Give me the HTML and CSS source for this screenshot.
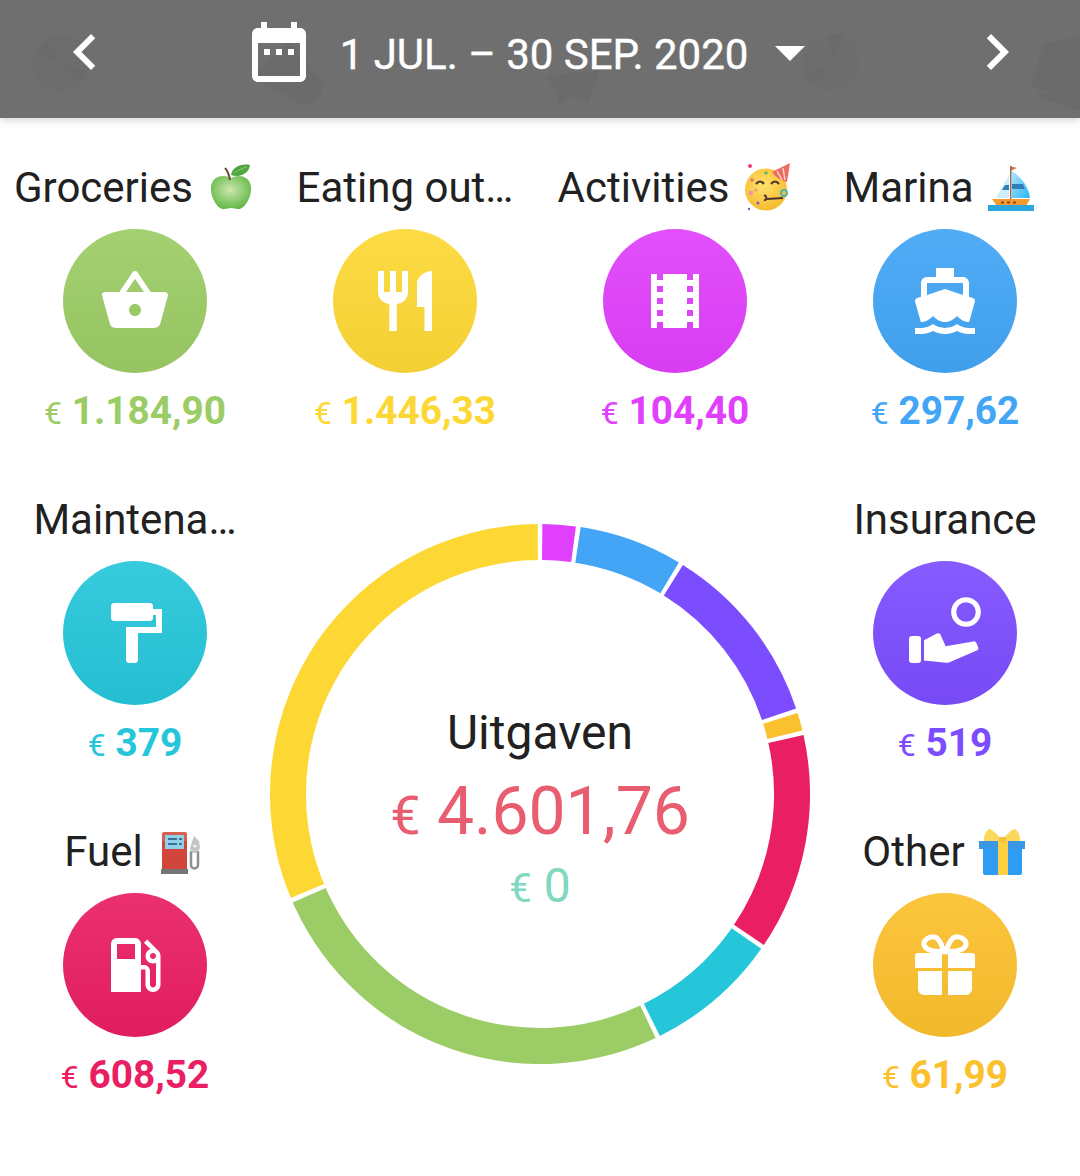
FILE: index.html
```html
<!DOCTYPE html>
<html>
<head>
    <title>Uitgaven</title>
    <link rel="stylesheet" href="styles.css">
</head>
<body>
    <header class="app-bar">
        <svg class="watermark" viewBox="0 0 1080 118">
            <circle cx="61" cy="63" r="28"/>
            <path d="M61 63L46 40l-8 12zM61 63l26 10-4 8z"/>
            <path d="M252 78l36-36 36 40-4 14-14 10zM262 78l40 26"/>
            <path d="M546 76l54-6-12 34-16-8-12 10-4-14z"/>
            <circle cx="831" cy="63" r="28"/>
            <path d="M831 63l-2-30 14 2zM831 63l-26 14 6 8z"/>
            <path d="M1030 86l14-42 36-8v69zM1040 92l40 14v5l-44-14z"/>
        </svg>
        <svg class="bar-icon" viewBox="0 0 24 24"><path d="M15.41 16.59L10.83 12l4.58-4.59L14 6l-6 6 6 6 1.41-1.41z"/></svg>
        <div class="range">
            <svg class="bar-icon" viewBox="0 0 24 24"><path d="M9 11H7v2h2v-2zm4 0h-2v2h2v-2zm4 0h-2v2h2v-2zm2-7h-1V2h-2v2H8V2H6v2H5c-1.11 0-1.99.9-1.99 2L3 20c0 1.1.89 2 2 2h14c1.1 0 2-.9 2-2V6c0-1.1-.9-2-2-2zm0 16H5V9h14v11z"/></svg>
            <span class="range-text">1 JUL. – 30 SEP. 2020</span>
            <svg class="bar-icon" viewBox="0 0 24 24"><path d="M7 10l5 5 5-5z"/></svg>
        </div>
        <svg class="bar-icon" viewBox="0 0 24 24"><path d="M8.59 16.59L13.17 12 8.59 7.41 10 6l6 6-6 6-1.41-1.41z"/></svg>
    </header>

    <main class="board">
        <div class="category green">
            <div class="label">Groceries
                <svg class="emoji" viewBox="0 0 48 48">
                    <defs><radialGradient id="apple" cx=".48" cy=".42" r=".6"><stop offset="0" stop-color="#cfe6b0"/><stop offset="1" stop-color="#5fb845"/></radialGradient></defs>
                    <g transform="translate(1 0)">
                        <path d="M22 15C28 11 41 12 42 24 43 34 35 47 29 46 26 46 25 45 22 45 19 45 18 46 15 46 9 47 1 34 2 24 3 12 16 11 22 15z" fill="url(#apple)"/>
                        <path d="M21 17C20 11 19 8 16 5" fill="none" stroke="#6d4c41" stroke-width="2"/>
                        <path d="M22 12C23 5 31 0 41 2 40 10 32 15 22 12z" fill="#4fa63f"/>
                        <path d="M25 10C30 7 34 5 38 4" fill="none" stroke="#8bc97a" stroke-width="1"/>
                    </g>
                </svg>
            </div>
            <div class="badge">
                <svg viewBox="0 0 24 24"><path d="M17.21 9l-4.38-6.56c-.19-.28-.51-.42-.83-.42-.32 0-.64.14-.83.43L6.79 9H2c-.55 0-1 .45-1 1 0 .09.01.18.04.27l2.54 9.27c.23.84 1 1.46 1.92 1.46h13c.92 0 1.69-.62 1.93-1.46l2.54-9.27L23 10c0-.55-.45-1-1-1h-4.79zM9 9l3-4.4L15 9H9zm3 8c-1.1 0-2-.9-2-2s.9-2 2-2 2 .9 2 2-.9 2-2 2z"/></svg>
            </div>
            <div class="amount"><span class="currency">€</span> 1.184,90</div>
        </div>

        <div class="category yellow">
            <div class="label">Eating out…</div>
            <div class="badge">
                <svg viewBox="0 0 24 24"><path d="M11 9H9V2H7v7H5V2H3v7c0 2.12 1.66 3.84 3.75 3.97V22h2.5v-9.03C11.34 12.84 13 11.12 13 9V2h-2v7zm5-3v8h2.5v8H21V2c-2.76 0-5 2.24-5 4z"/></svg>
            </div>
            <div class="amount"><span class="currency">€</span> 1.446,33</div>
        </div>

        <div class="category magenta">
            <div class="label">Activities
                <svg class="emoji" viewBox="0 0 48 48">
                    <defs><radialGradient id="face" cx=".45" cy=".4" r=".65"><stop offset="0" stop-color="#ffe36b"/><stop offset="1" stop-color="#f5b72b"/></radialGradient></defs>
                    <circle cx="22" cy="26.500" r="21" fill="url(#face)"/>
                    <path d="M46 0L28 9Q34 17 43 19z" fill="#ef6a62"/>
                    <path d="M33 8l5 9M39 5l2 12" stroke="#fbd5c8" stroke-width="1.500"/>
                    <path d="M12 21q4-5 8 0M27 21q4-5 8 0" fill="none" stroke="#4e342e" stroke-width="2.200"/>
                    <path d="M20 33c3-2 3 5 0 4" fill="none" stroke="#4e342e" stroke-width="2"/>
                    <path d="M23 36l16-1" stroke="#4e342e" stroke-width="2"/>
                    <circle cx="40" cy="30" r="3" fill="none" stroke="#4db6ac" stroke-width="2"/>
                    <circle cx="8" cy="17" r="1.800" fill="#e57373"/>
                    <circle cx="7" cy="30" r="2.200" fill="#f48fb1"/>
                    <circle cx="12" cy="27" r="1.500" fill="#ef9a9a"/>
                    <circle cx="14" cy="40" r="1.500" fill="#7e57c2"/>
                    <circle cx="22" cy="10" r="1.800" fill="#66bb6a"/>
                    <circle cx="6" cy="3" r="2" fill="#ec407a"/>
                    <circle cx="5" cy="46" r="1.200" fill="#5c6bc0"/>
                </svg>
            </div>
            <div class="badge">
                <svg viewBox="0 0 24 24"><path d="M18 3v2h-2V3H8v2H6V3H4v18h2v-2h2v2h8v-2h2v2h2V3h-2zM8 17H6v-2h2v2zm0-4H6v-2h2v2zm0-4H6V7h2v2zm10 8h-2v-2h2v2zm0-4h-2v-2h2v2zm0-4h-2V7h2v2z"/></svg>
            </div>
            <div class="amount"><span class="currency">€</span> 104,40</div>
        </div>

        <div class="category blue">
            <div class="label">Marina
                <svg class="emoji emoji-boat" viewBox="0 0 48 48">
                    <defs><linearGradient id="sail" x1="0" y1="0" x2="1" y2="1"><stop offset="0" stop-color="#b3e5fc"/><stop offset="1" stop-color="#29b6f6"/></linearGradient></defs>
                    <path d="M23 3l7 2-7 3z" fill="#e8683f"/>
                    <path d="M23 3h1.500v33H23z" fill="#8d6e63"/>
                    <path d="M25 8L25 35 43 35C42 24 34 14 25 8z" fill="url(#sail)"/>
                    <path d="M22 12L22 35 9 35z" fill="#cfeefb"/>
                    <path d="M22 22v5H15l3-5z" fill="#2f7fb8"/>
                    <path d="M25 21h11l2 5H25z" fill="#2f7fb8"/>
                    <path d="M5 36h38l-4 7H10z" fill="#f59a2f"/>
                    <path d="M14 38.500h3v2h-3zM20 38.500h3v2h-3zM26 38.500h3v2h-3z" fill="#8d4a12"/>
                    <path d="M1 42h46v6H1z" fill="#29a6dd"/>
                </svg>
            </div>
            <div class="badge">
                <svg viewBox="0 0 24 24"><path d="M20 21c-1.39 0-2.78-.47-4-1.32-2.44 1.71-5.56 1.71-8 0C6.78 20.53 5.39 21 4 21H2v2h2c1.38 0 2.74-.35 4-.99 2.52 1.29 5.48 1.29 8 0 1.26.65 2.62.99 4 .99h2v-2h-2zM3.95 19H4c1.6 0 3.02-.88 4-2 .98 1.12 2.4 2 4 2s3.02-.88 4-2c.98 1.12 2.4 2 4 2h.05l1.89-6.68c.08-.26.06-.54-.06-.78s-.34-.42-.6-.5L20 10.62V6c0-1.1-.9-2-2-2h-3V1H9v3H6c-1.1 0-2 .9-2 2v4.62l-1.29.42c-.26.08-.48.26-.6.5s-.15.52-.06.78L3.95 19zM6 6h12v3.97L12 8 6 9.97V6z"/></svg>
            </div>
            <div class="amount"><span class="currency">€</span> 297,62</div>
        </div>

        <div class="category cyan">
            <div class="label">Maintena…</div>
            <div class="badge">
                <svg viewBox="0 0 24 24"><path d="M18 4V3c0-.55-.45-1-1-1H5c-.55 0-1 .45-1 1v4c0 .55.45 1 1 1h12c.55 0 1-.45 1-1V6h1v4H9v11c0 .55.45 1 1 1h2c.55 0 1-.45 1-1v-9h8V4h-3z"/></svg>
            </div>
            <div class="amount"><span class="currency">€</span> 379</div>
        </div>

        <div class="chart">
            <svg class="donut" viewBox="0 0 540 540">
                <circle class="segment magenta" cx="270" cy="270" r="252" pathLength="360" stroke-dasharray="7.17 360" transform="rotate(-89.5 270 270)"/>
                <circle class="segment blue" cx="270" cy="270" r="252" pathLength="360" stroke-dasharray="22.28 360" transform="rotate(-81.33 270 270)"/>
                <circle class="segment violet" cx="270" cy="270" r="252" pathLength="360" stroke-dasharray="39.6 360" transform="rotate(-58.05 270 270)"/>
                <circle class="segment orange" cx="270" cy="270" r="252" pathLength="360" stroke-dasharray="3.85 360" transform="rotate(-17.45 270 270)"/>
                <circle class="segment pink" cx="270" cy="270" r="252" pathLength="360" stroke-dasharray="46.6 360" transform="rotate(-12.6 270 270)"/>
                <circle class="segment cyan" cx="270" cy="270" r="252" pathLength="360" stroke-dasharray="28.65 360" transform="rotate(35 270 270)"/>
                <circle class="segment green" cx="270" cy="270" r="252" pathLength="360" stroke-dasharray="91.7 360" transform="rotate(64.65 270 270)"/>
                <circle class="segment yellow" cx="270" cy="270" r="252" pathLength="360" stroke-dasharray="112.15 360" transform="rotate(157.35 270 270)"/>
            </svg>
            <div class="totals">
                <div class="totals-title">Uitgaven</div>
                <div class="totals-spent"><span class="totals-currency">€</span> 4.601,76</div>
                <div class="totals-income"><span class="income-currency">€</span> 0</div>
            </div>
        </div>

        <div class="category violet">
            <div class="label">Insurance</div>
            <div class="badge">
                <svg viewBox="0 0 24 24">
                    <circle cx="19" cy="5" r="4.100" fill="none" stroke="#fff" stroke-width="1.700"/>
                    <rect x="0" y="13" width="4" height="9" rx="1"/>
                    <path d="M5 14.400L9.300 12.200a1 1 0 0 1 1.100.1L12.200 16.400 21.400 14.800a1 1 0 0 1 1.100.6l.6 1.400a.8.8 0 0 1-.5 1L13.300 21.800a1.500 1.500 0 0 1-.8.1L5 21.200z"/>
                </svg>
            </div>
            <div class="amount"><span class="currency">€</span> 519</div>
        </div>

        <div class="category pink">
            <div class="label">Fuel
                <svg class="emoji" viewBox="0 0 48 48">
                    <path d="M4 7a2 2 0 0 1 2-2h21a2 2 0 0 1 2 2v8H4z" fill="#d9604f"/>
                    <path d="M4 14h25v29H4z" fill="#d2453a"/>
                    <path d="M7 8h19v14H7z" fill="#8fd0ea"/>
                    <path d="M10 11h9v2h-9zM10 16h9v2h-9zM21 11h3v2h-3zM21 16h3v2h-3z" fill="#3d6f8e"/>
                    <path d="M3 42h27v5H3z" fill="#757575"/>
                    <path d="M33 24v14a3.500 3.500 0 0 0 7 0V24" fill="none" stroke="#8f8f8f" stroke-width="2.500"/>
                    <path d="M36 9l5 5 1 7-3 5h-5l-2-5 2-6z" fill="#c4c4c4"/>
                    <circle cx="37" cy="19" r="1.500" fill="#f5f5f5"/>
                </svg>
            </div>
            <div class="badge">
                <svg viewBox="0 0 24 24"><path d="M19.77 7.23l.01-.01-3.72-3.72L15 4.56l2.11 2.11c-.94.36-1.61 1.26-1.61 2.33 0 1.38 1.12 2.5 2.5 2.5.36 0 .69-.08 1-.21v7.21c0 .55-.45 1-1 1s-1-.45-1-1V14c0-1.1-.9-2-2-2h-1V5c0-1.1-.9-2-2-2H6c-1.1 0-2 .9-2 2v16h10v-7.5h1.5v5c0 1.38 1.12 2.5 2.5 2.5s2.5-1.12 2.5-2.5V9c0-.69-.28-1.32-.73-1.77zM12 10H6V5h6v5zm6 0c-.55 0-1-.45-1-1s.45-1 1-1 1 .45 1 1-.45 1-1 1z"/></svg>
            </div>
            <div class="amount"><span class="currency">€</span> 608,52</div>
        </div>

        <div class="category orange">
            <div class="label">Other
                <svg class="emoji emoji-gift" viewBox="0 0 48 48">
                    <path d="M24 14H6C5 9 9 2 12 2 16 4 21 9 24 14z" fill="#fbd75b"/>
                    <path d="M24 14H42C43 9 39 2 36 2 32 4 27 9 24 14z" fill="#fbd75b"/>
                    <path d="M5 22h39v24a2 2 0 0 1-2 2H7a2 2 0 0 1-2-2z" fill="#2d9cf2"/>
                    <path d="M1 14h46v8H1z" fill="#3a97e6"/>
                    <path d="M20 14h10v34H20z" fill="#fdd043"/>
                    <path d="M21 10h7v5h-7z" fill="#f5c33b"/>
                </svg>
            </div>
            <div class="badge">
                <svg viewBox="0 0 24 24">
                    <path d="M8 2.600C9.800 2.600 11 5.400 11.600 7.600 9 7.600 5.400 7.200 5 5.200 4.800 3.800 6.400 2.600 8 2.600zM16 2.600C14.200 2.600 13 5.400 12.400 7.600 15 7.600 18.600 7.200 19 5.200 19.200 3.800 17.600 2.600 16 2.600z" fill="none" stroke="#fff" stroke-width="1.700"/>
                    <path d="M3 8h8v5H2V9a1 1 0 0 1 1-1zM13 8h8a1 1 0 0 1 1 1v4h-9zM3 14h8v8H5a2 2 0 0 1-2-2zM13 14h8v6a2 2 0 0 1-2 2h-6z"/>
                </svg>
            </div>
            <div class="amount"><span class="currency">€</span> 61,99</div>
        </div>
    </main>
</body>
</html>
```

FILE: styles.css
```css
* {
    box-sizing: border-box;
}

body {
    margin: 0;
    width: 1080px;
    height: 1176px;
    overflow: hidden;
    background: #fff;
    color: #212121;
    font-family: Roboto, "Liberation Sans", sans-serif;
}

.app-bar {
    position: relative;
    display: flex;
    align-items: flex-start;
    justify-content: space-between;
    height: 118px;
    padding: 16px 47px 0 49px;
    background: #6f6f6f;
    box-shadow: 0 2px 8px rgba(0, 0, 0, 0.18);
}

.watermark {
    position: absolute;
    top: 0;
    left: 0;
    width: 1080px;
    height: 118px;
    fill: #6b6b6b;
}

.watermark circle {
    fill: #6d6d6d;
}

.bar-icon {
    position: relative;
    flex: none;
    width: 72px;
    height: 72px;
    fill: #fff;
}

.range {
    position: relative;
    display: flex;
    align-items: flex-start;
    margin-right: 13px;
}

.range-text {
    margin: 3px 6px 0 25px;
    color: #fff;
    font-size: 42px;
    line-height: 72px;
    white-space: nowrap;
    -webkit-text-stroke: 0.4px #fff;
}

.board {
    display: grid;
    grid-template-columns: repeat(4, 270px);
    grid-auto-rows: 332px;
    padding-top: 39px;
}

.category {
    display: flex;
    flex-direction: column;
    align-items: center;
}

.label {
    display: flex;
    align-items: center;
    justify-content: center;
    gap: 15px;
    height: 60px;
    color: #212121;
    font-size: 42px;
    white-space: nowrap;
}

.emoji {
    flex: none;
    width: 48px;
    height: 48px;
}

.emoji-boat {
    margin-left: -2px;
    margin-right: 12px;
}

.emoji-gift {
    margin-left: -2px;
    margin-right: 2px;
}

.badge {
    display: flex;
    align-items: center;
    justify-content: center;
    width: 144px;
    height: 144px;
    margin-top: 12px;
    border-radius: 50%;
    background-color: currentColor;
    background-image: linear-gradient(rgba(255, 255, 255, 0.08), rgba(0, 0, 0, 0.04));
}

.badge svg {
    width: 72px;
    height: 72px;
    fill: #fff;
}

.amount {
    margin-top: 13px;
    font-size: 38.8px;
    font-weight: 700;
    line-height: 50px;
    white-space: nowrap;
}

.currency {
    font-size: 32px;
    font-weight: 400;
}

.chart {
    position: relative;
    grid-column: 2 / 4;
    grid-row: 2 / 4;
    width: 540px;
    height: 540px;
    margin-top: 35px;
}

.donut {
    display: block;
    width: 540px;
    height: 540px;
}

.segment {
    fill: none;
    stroke: currentColor;
    stroke-width: 36;
}

.totals {
    position: absolute;
    top: 0;
    left: 0;
    width: 540px;
    height: 540px;
    display: flex;
    flex-direction: column;
    align-items: center;
    padding-top: 178px;
    text-align: center;
}

.totals-title {
    font-size: 48px;
    line-height: 62px;
}

.totals-spent {
    margin-top: 6px;
    color: #e85d6f;
    font-size: 66px;
    line-height: 84px;
}

.totals-currency {
    font-size: 54px;
}

.totals-income {
    margin-top: -2px;
    color: #80d8c0;
    font-size: 48px;
    line-height: 60px;
}

.income-currency {
    font-size: 40px;
}

.green { color: #9ccc65; }
.yellow { color: #fdd835; }
.magenta { color: #e040fb; }
.blue { color: #42a5f5; }
.violet { color: #7c4dff; }
.orange { color: #fbc02d; }
.pink { color: #e91e63; }
.cyan { color: #26c6da; }
```
